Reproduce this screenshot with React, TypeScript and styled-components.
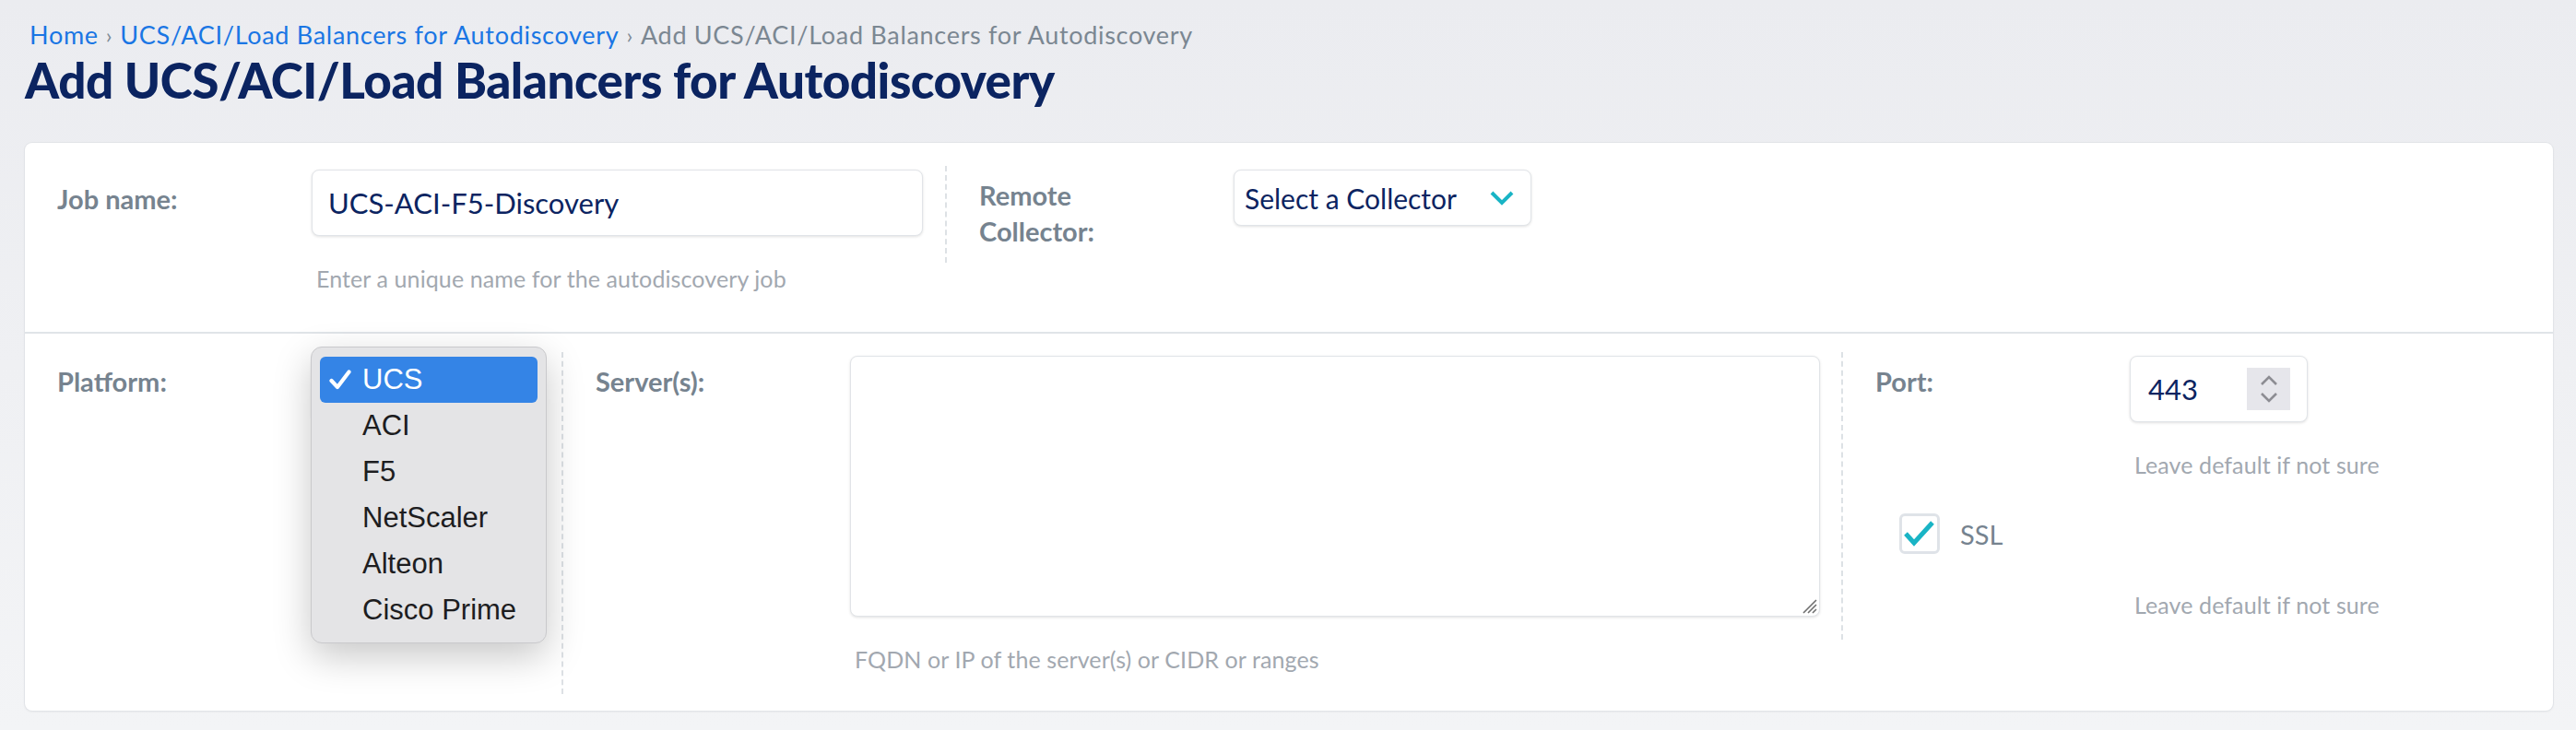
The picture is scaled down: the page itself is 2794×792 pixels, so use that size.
import { createGlobalStyle, styled } from "styled-components";

const GlobalStyle = createGlobalStyle`
  html, body {
    margin: 0;
    padding: 0;
  }
  body {
    background: linear-gradient(#ebecf0, #f3f4f6);
    min-height: 792px;
    font-family: "Lato", "Noto Sans", sans-serif;
  }
`;

const platforms = ["UCS", "ACI", "F5", "NetScaler", "Alteon", "Cisco Prime"];

export default function App() {
  return (
    <Page>
      <GlobalStyle />
      <Breadcrumb>
        <Crumb href="#">Home</Crumb>
        <Sep>›</Sep>
        <Crumb href="#">UCS/ACI/Load Balancers for Autodiscovery</Crumb>
        <Sep>›</Sep>
        <Current>Add UCS/ACI/Load Balancers for Autodiscovery</Current>
      </Breadcrumb>
      <Title>Add UCS/ACI/Load Balancers for Autodiscovery</Title>

      <Card>
        <Section $top>
          <Group $width={1000}>
            <Field>
              <Label $offset={12}>Job name:</Label>
              <Control>
                <TextInput defaultValue="UCS-ACI-F5-Discovery" />
                <Help>Enter a unique name for the autodiscovery job</Help>
              </Control>
            </Field>
          </Group>
          <Group $divider $pb={15}>
            <Field>
              <Label $offset={8} $narrow>
                Remote Collector:
              </Label>
              <Control>
                <SelectBox>
                  <span>Select a Collector</span>
                  <svg width="26" height="16" viewBox="0 0 26 16">
                    <path
                      d="M2 2 L13 13 L24 2"
                      fill="none"
                      stroke="#19b4c5"
                      strokeWidth="4"
                    />
                  </svg>
                </SelectBox>
              </Control>
            </Field>
          </Group>
        </Section>

        <Section>
          <Group $width={584}>
            <Field>
              <Label $offset={8}>Platform:</Label>
              <Control>
                <ClosedSelect />
                <Popup>
                  {platforms.map((p, i) => (
                    <Option key={p} $selected={i === 0}>
                      {i === 0 && (
                        <Tick width="24" height="22" viewBox="0 0 24 22">
                          <path
                            d="M2.5 12 L9 19 L21.5 2.5"
                            fill="none"
                            stroke="#fff"
                            strokeWidth="4.2"
                            strokeLinecap="round"
                            strokeLinejoin="round"
                          />
                        </Tick>
                      )}
                      {p}
                    </Option>
                  ))}
                </Popup>
              </Control>
            </Field>
          </Group>
          <Group $divider $width={1390}>
            <Field>
              <Label $offset={8}>Server(s):</Label>
              <Control>
                <AreaWrap>
                  <TextArea />
                  <Grip width="18" height="18" viewBox="0 0 18 18">
                    <path
                      d="M17 3 L3 17 M17 8 L8 17 M17 13 L13 17"
                      stroke="#6f6f6f"
                      strokeWidth="1.6"
                    />
                  </Grip>
                </AreaWrap>
                <Help>FQDN or IP of the server(s) or CIDR or ranges</Help>
              </Control>
            </Field>
          </Group>
          <Group $divider>
            <Field>
              <Label $offset={8}>Port:</Label>
              <Control>
                <NumberBox>
                  <span>443</span>
                  <Spinner>
                    <svg width="22" height="32" viewBox="0 0 22 32">
                      <path
                        d="M3 11 L11 3 L19 11 M3 21 L11 29 L19 21"
                        fill="none"
                        stroke="#8d8d93"
                        strokeWidth="2.6"
                      />
                    </svg>
                  </Spinner>
                </NumberBox>
                <Help>Leave default if not sure</Help>
              </Control>
            </Field>
            <CheckRow>
              <CheckBox>
                <svg width="38" height="30" viewBox="0 0 38 30">
                  <path
                    d="M4 15 L13 25 L33 3"
                    fill="none"
                    stroke="#19b4c5"
                    strokeWidth="5"
                  />
                </svg>
              </CheckBox>
              <CheckLabel>SSL</CheckLabel>
            </CheckRow>
            <Field>
              <span />
              <Help $gap={41}>Leave default if not sure</Help>
            </Field>
          </Group>
        </Section>
      </Card>
    </Page>
  );
}

const Page = styled.div`
  padding: 20px 25px 21px 27px;
`;

const Breadcrumb = styled.div`
  display: flex;
  align-items: center;
  gap: 8px;
  font-size: 27px;
  line-height: 36px;
  letter-spacing: 0.7px;
  padding-left: 5px;
`;

const Crumb = styled.a`
  color: #1a76e4;
  text-decoration: none;
`;

const Sep = styled.span`
  color: #7e8a96;
  font-size: 24px;
`;

const Current = styled.span`
  color: #7b8792;
`;

const Title = styled.h1`
  margin: 0;
  font-size: 53px;
  line-height: 62px;
  font-weight: 900;
  color: #0b2461;
  letter-spacing: -0.5px;
`;

const Card = styled.div`
  margin-top: 37px;
  background: #fff;
  border-radius: 8px;
  box-shadow: 0 0 0 1px #e2e4e8, 0 1px 3px rgba(0, 0, 0, 0.08);
`;

const Section = styled.div<{ $top?: boolean }>`
  display: flex;
  align-items: flex-start;
  padding: ${(p) => (p.$top ? "25px 0 20px" : "20px 0 18px")};
  border-top: ${(p) => (p.$top ? "none" : "2px solid #e0e4e8")};
`;

const Group = styled.div<{ $width?: number; $divider?: boolean; $pb?: number }>`
  box-sizing: border-box;
  ${(p) => (p.$width ? `width: ${p.$width}px; flex: none;` : "flex: 1;")}
  padding: 4px 26px ${(p) => p.$pb ?? 24}px 35px;
  border-left: ${(p) => (p.$divider ? "2px dashed #dde1e5" : "none")};
  margin-left: ${(p) => (p.$divider ? "-2px" : "0")};
`;

const Field = styled.div`
  display: grid;
  grid-template-columns: 276px 1fr;
  align-items: start;
`;

const Label = styled.div<{ $offset: number; $narrow?: boolean }>`
  padding-top: ${(p) => p.$offset}px;
  font-size: 29px;
  line-height: 39px;
  font-weight: 700;
  color: #76838f;
  max-width: ${(p) => (p.$narrow ? "170px" : "none")};
`;

const Control = styled.div`
  position: relative;
  display: flex;
  flex-direction: column;
  align-items: flex-start;
`;

const fieldBox = `
  box-sizing: border-box;
  background: #fff;
  border: 1px solid #e1e4e8;
  border-radius: 8px;
  box-shadow: 0 1px 3px rgba(0, 0, 0, 0.12);
`;

const TextInput = styled.input`
  ${fieldBox}
  width: 663px;
  height: 72px;
  padding: 0 17px;
  font-family: "Lato", sans-serif;
  font-size: 31px;
  color: #0b2461;
  outline: none;
`;

const Help = styled.div<{ $gap?: number }>`
  margin-top: ${(p) => p.$gap ?? 32}px;
  font-size: 25px;
  line-height: 28px;
  letter-spacing: 0.1px;
  color: #a2a8b0;
  padding-left: 5px;
`;

const SelectBox = styled.div`
  ${fieldBox}
  width: 323px;
  height: 61px;
  padding: 0 18px 0 11px;
  display: flex;
  align-items: center;
  justify-content: space-between;
  font-size: 30px;
  color: #0b2461;
`;

const ClosedSelect = styled.div`
  ${fieldBox}
  width: 248px;
  height: 72px;
`;

const Popup = styled.div`
  position: absolute;
  top: -10px;
  left: -1px;
  width: 256px;
  box-sizing: border-box;
  padding: 10px 9px;
  background: #e4e4e6;
  border: 1px solid #c9c9cc;
  border-radius: 12px;
  box-shadow: 0 14px 40px rgba(0, 0, 0, 0.22);
  z-index: 5;
`;

const Option = styled.div<{ $selected?: boolean }>`
  position: relative;
  height: 50px;
  display: flex;
  align-items: center;
  padding-left: 46px;
  border-radius: 6px;
  font-family: "Liberation Sans", Arial, sans-serif;
  font-size: 31px;
  color: ${(p) => (p.$selected ? "#fff" : "#1d1d1f")};
  background: ${(p) => (p.$selected ? "#3484e6" : "transparent")};
`;

const Tick = styled.svg`
  position: absolute;
  left: 10px;
  top: 14px;
`;

const AreaWrap = styled.div`
  position: relative;
`;

const TextArea = styled.textarea`
  ${fieldBox}
  display: block;
  width: 1052px;
  height: 283px;
  resize: none;
  outline: none;
`;

const Grip = styled.svg`
  position: absolute;
  right: 3px;
  bottom: 3px;
`;

const NumberBox = styled.div`
  ${fieldBox}
  width: 193px;
  height: 72px;
  padding: 0 18px 0 19px;
  display: flex;
  align-items: center;
  justify-content: space-between;
  font-size: 31px;
  color: #0b2461;
`;

const Spinner = styled.div`
  width: 47px;
  height: 46px;
  background: #e6e6eb;
  display: flex;
  align-items: center;
  justify-content: center;
`;

const CheckRow = styled.div`
  display: flex;
  align-items: center;
  gap: 22px;
  margin-top: 39px;
  padding-left: 26px;
`;

const CheckBox = styled.div`
  box-sizing: border-box;
  width: 44px;
  height: 44px;
  border: 3px solid #dfe3e8;
  border-radius: 6px;
  display: flex;
  align-items: center;
  justify-content: center;
`;

const CheckLabel = styled.span`
  font-size: 29px;
  color: #76838f;
`;
